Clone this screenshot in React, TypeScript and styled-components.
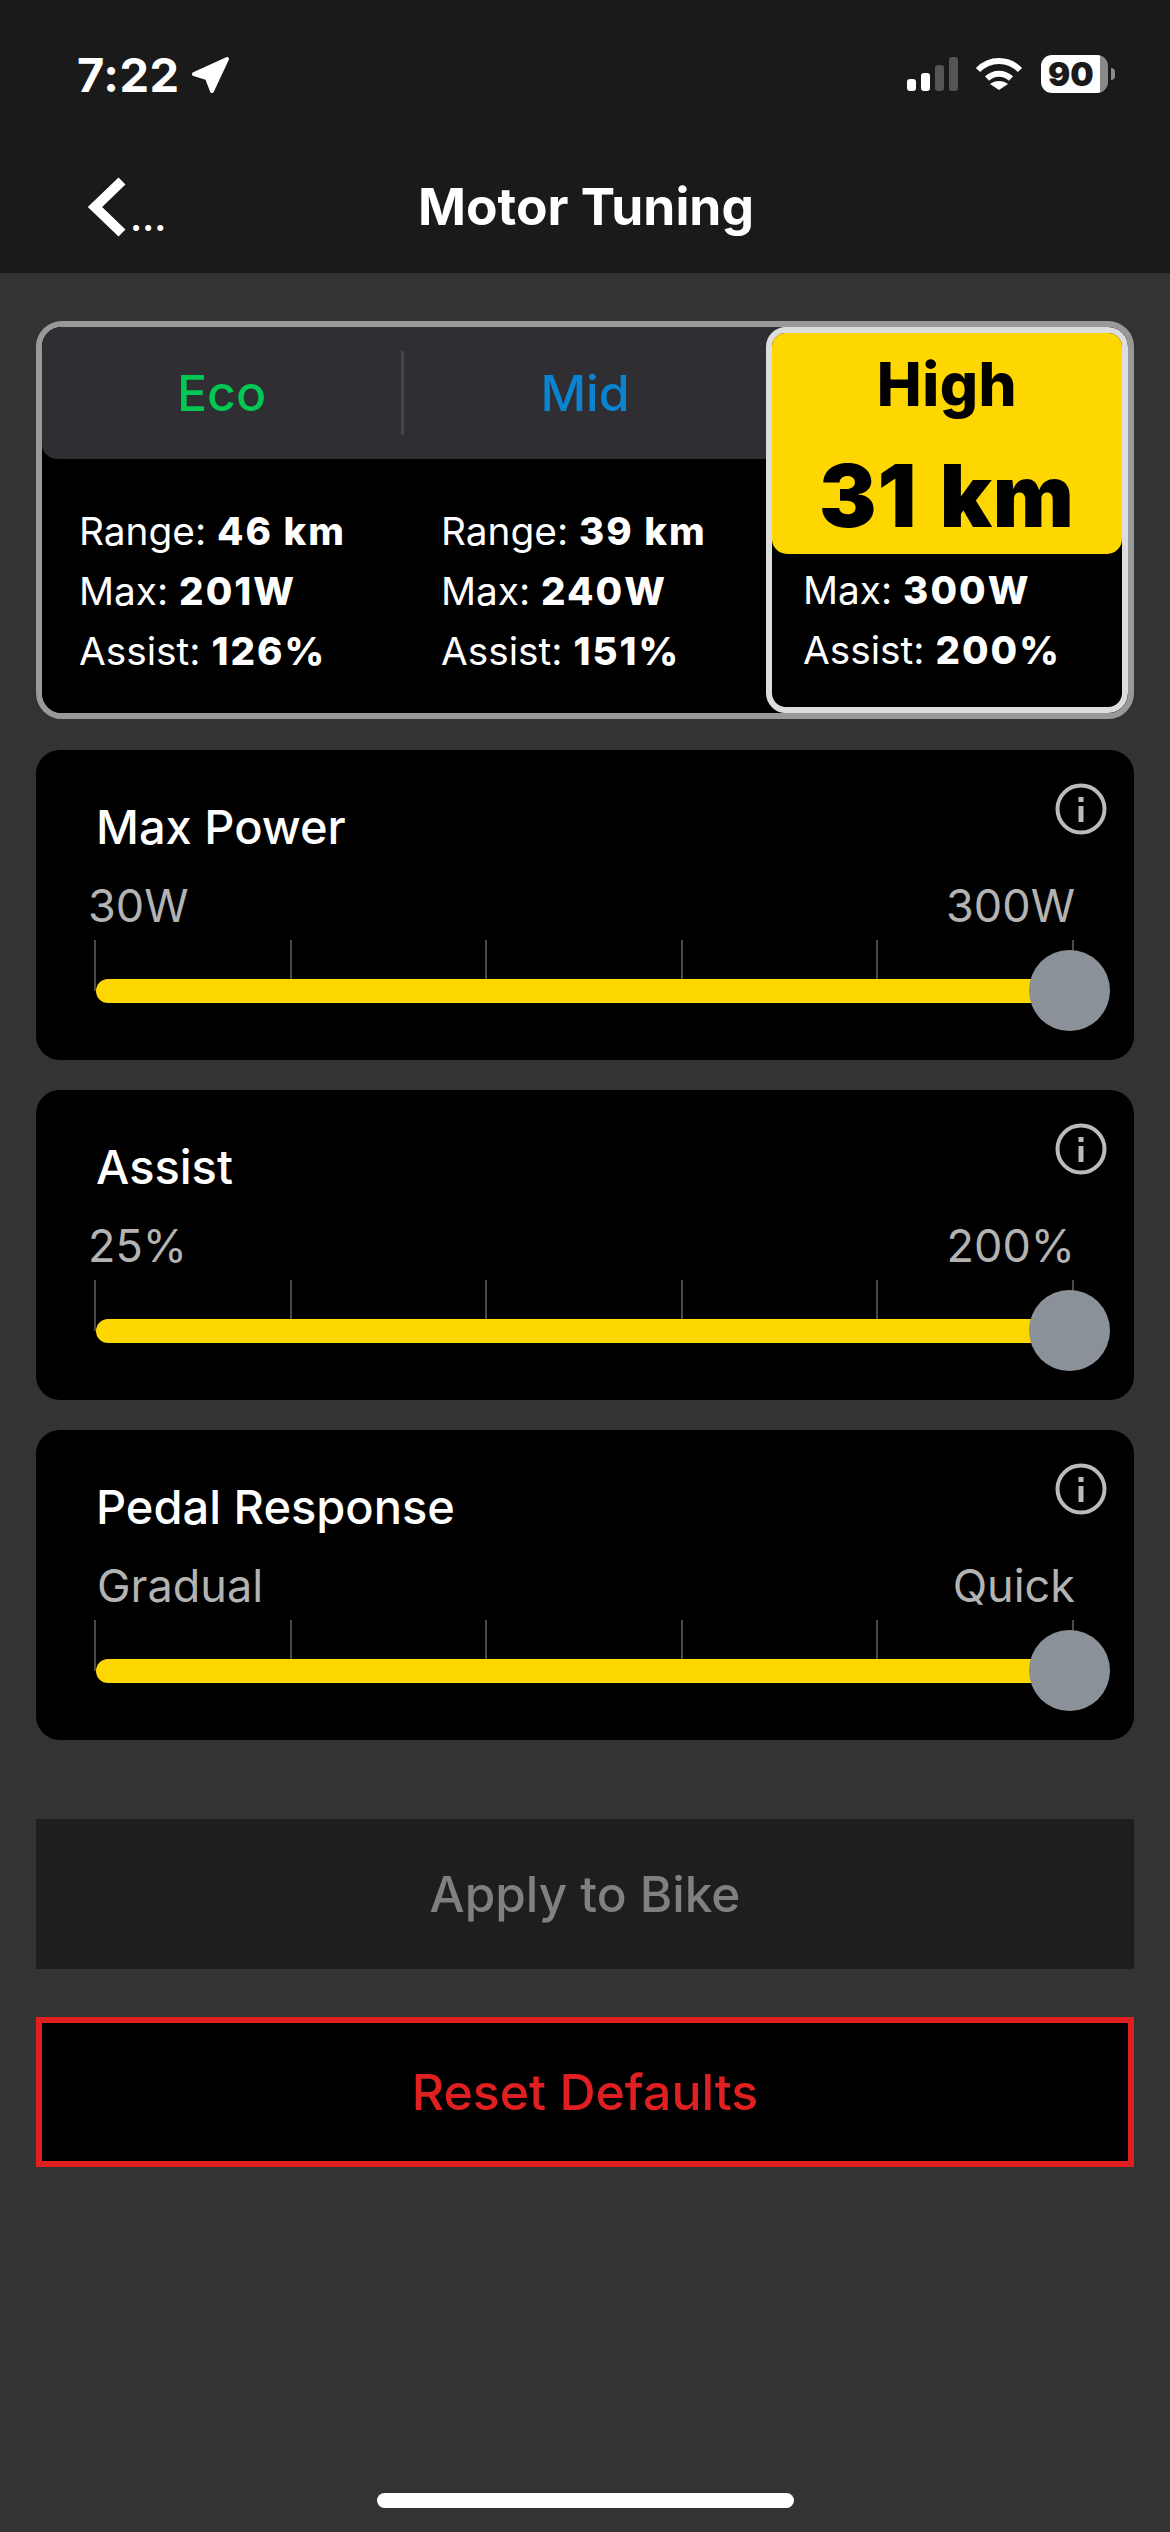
import React from "react";
import styled, { createGlobalStyle } from "styled-components";

const Global = createGlobalStyle`
  html, body { margin: 0; padding: 0; background: #333333; }
  body { font-family: Inter, "Liberation Sans", sans-serif; -webkit-font-smoothing: antialiased; font-optical-sizing: none; }
  * { box-sizing: border-box; }
`;

const Page = styled.div`
  width: 1170px;
  height: 2532px;
  background: #333333;
  display: flex;
  flex-direction: column;
  overflow: hidden;
`;
const Header = styled.header`
  background: #1a1a1a;
  height: 273px;
  flex: none;
  display: flex;
  flex-direction: column;
`;
const StatusBar = styled.div`
  height: 148px;
  padding: 0 55px 0 77px;
  display: flex;
  align-items: center;
  justify-content: space-between;
`;
const StatusLeft = styled.div`
  display: flex;
  align-items: center;
  gap: 12px;
`;
const Clock = styled.span`
  color: #fff;
  font-size: 47px;
  font-weight: 700;
  line-height: 1;
  letter-spacing: 0.5px;
`;
const StatusRight = styled.div`
  display: flex;
  align-items: center;
`;
const Wifi = styled.svg`
  margin: 0 18px 0 17px;
`;
const Battery = styled.div`
  width: 67px;
  height: 38px;
  border-radius: 11px;
  background: linear-gradient(90deg, #fff 88%, #8a8a8a 88%);
  color: #1a1a1a;
  font-size: 33px;
  font-weight: 900;
  display: flex;
  align-items: center;
  padding-left: 7px;
  line-height: 1;
`;
const BatteryCap = styled.div`
  width: 4px;
  height: 12px;
  margin-left: 3px;
  background: #8a8a8a;
  border-radius: 0 6px 6px 0;
`;
const Nav = styled.nav`
  height: 125px;
  display: flex;
  align-items: center;
  padding: 0 48px 8px 82px;
`;
const Back = styled.div`
  width: 100px;
  display: flex;
  align-items: flex-end;
`;
const BackDots = styled.span`
  color: #fff;
  font-size: 38px;
  font-weight: 600;
  line-height: 1;
  margin-left: 3px;
  margin-bottom: 5px;
`;
const NavTitle = styled.h1`
  flex: 1;
  margin: 0 132px 0 0;
  text-align: center;
  color: #fff;
  font-size: 51.5px;
  font-weight: 700;
  line-height: 1;
`;
const Content = styled.main`
  flex: 1;
  padding: 48px 36px 0;
  display: flex;
  flex-direction: column;
  position: relative;
`;
const TierCard = styled.section`
  height: 398px;
  border: 6px solid #999999;
  border-radius: 26px;
  background: linear-gradient(#2f2f33 132px, #000 132px);
  overflow: hidden;
  display: grid;
  grid-template-columns: repeat(3, 362px);
  margin-bottom: 31px;
`;
const Tier = styled.div<{ $selected?: boolean }>`
  display: flex;
  flex-direction: column;
  background: #000;
  ${(p) => p.$selected && `
    border: 6px solid #dddddd;
    border-radius: 20px;
  `}
`;
const TierHead = styled.div<{ $rounded?: boolean }>`
  height: 132px;
  padding: 24px 0;
  background: #2f2f33;
  border-bottom-left-radius: ${(p) => (p.$rounded ? "15px" : "0")};
`;
const TierName = styled.div<{ $color: string; $divider?: boolean }>`
  height: 84px;
  display: flex;
  align-items: center;
  justify-content: center;
  color: ${(p) => p.$color};
  font-size: 50px;
  font-weight: 500;
  border-right: ${(p) => (p.$divider ? "3px solid #47474b" : "0")};
`;
const ActiveHead = styled.div`
  height: 221px;
  background: #ffd700;
  border-radius: 14px 14px 15px 15px;
  color: #000;
  display: flex;
  flex-direction: column;
  align-items: center;
`;
const ActiveName = styled.div`
  font-size: 60px;
  font-weight: 800;
  letter-spacing: 0.5px;
  line-height: 70px;
  margin-top: 16px;
`;
const ActiveRange = styled.div`
  font-size: 86px;
  font-weight: 900;
  letter-spacing: 1px;
  word-spacing: 4px;
  line-height: 100px;
  margin-top: 27px;
`;
const Stats = styled.div<{ $selected?: boolean }>`
  padding: ${(p) => (p.$selected ? "6px 0 0 31px" : "42px 0 0 37px")};
  color: #fff;
  font-size: 38.8px;
  line-height: 59px;
  font-weight: 400;
  white-space: nowrap;
  b { font-weight: 800; font-size: 38.5px; letter-spacing: 2px; }
`;
const SliderCard = styled.section`
  height: 310px;
  border-radius: 24px;
  background: #000;
  padding-top: 33px;
  margin-bottom: 30px;
  display: flex;
  flex-direction: column;
`;
const SliderHead = styled.div`
  height: 52px;
  padding: 0 27px 0 60px;
  display: flex;
  justify-content: space-between;
  align-items: flex-start;
`;
const SliderTitle = styled.h2`
  margin: 0;
  color: #fff;
  font-size: 47px;
  font-weight: 500;
  line-height: 56px;
  margin-top: 16px;
`;
const Limits = styled.div`
  margin-top: 43px;
  margin-bottom: -17px;
  height: 56px;
  padding: 0 59px 0 52px;
  display: flex;
  justify-content: space-between;
  align-items: center;
  color: #b3b3b3;
  font-size: 45px;
  line-height: 56px;
`;
const LimitLabel = styled.span<{ $inset?: number }>`
  margin-left: ${(p) => p.$inset || 0}px;
`;
const Track = styled.div`
  position: relative;
  margin: 23px 0 0 58px;
  width: 1016px;
  height: 91px;
`;
const Ticks = styled.div`
  width: 980px;
  display: flex;
  justify-content: space-between;
`;
const Tick = styled.i`
  display: block;
  width: 2px;
  height: 51px;
  background: #4a4a4a;
`;
const Bar = styled.div`
  position: absolute;
  left: 2px;
  top: 39px;
  width: 970px;
  height: 24px;
  border-radius: 12px;
  background: #ffd700;
`;
const Thumb = styled.div`
  position: absolute;
  left: 935px;
  top: 10px;
  width: 81px;
  height: 81px;
  border-radius: 50%;
  background: #8a9199;
`;
const ActionButton = styled.button<{ $danger?: boolean }>`
  display: block;
  width: 1098px;
  height: 150px;
  padding: 0;
  border-radius: 0;
  font-family: inherit;
  font-size: ${(p) => (p.$danger ? "50px" : "49.5px")};
  font-weight: 500;
  text-align: center;
  border: ${(p) => (p.$danger ? "6px solid #e02020" : "0")};
  background: ${(p) => (p.$danger ? "#000" : "#1e1e1e")};
  color: ${(p) => (p.$danger ? "#e02020" : "#808080")};
`;
const ApplyButton = styled(ActionButton)`
  margin-top: 49px;
  margin-bottom: 48px;
`;
const HomeIndicator = styled.div`
  position: absolute;
  left: 377px;
  bottom: 24px;
  width: 417px;
  height: 15px;
  border-radius: 8px;
  background: #fff;
`;

const InfoIcon = () => (
  <svg width="52" height="52" viewBox="0 0 52 52" fill="none">
    <circle cx="26" cy="26" r="23.5" stroke="#bbbbbb" strokeWidth="4" />
    <rect x="23.5" y="14" width="5" height="5" fill="#bbbbbb" />
    <rect x="23.5" y="23" width="5" height="16" fill="#bbbbbb" />
  </svg>
);

const sliders = [
  { title: "Max Power", min: "30W", max: "300W", inset: 0 },
  { title: "Assist", min: "25%", max: "200%", inset: 0 },
  { title: "Pedal Response", min: "Gradual", max: "Quick", inset: 9 },
];

export default function App() {
  return (
    <Page>
      <Global />
      <Header>
        <StatusBar>
          <StatusLeft>
            <Clock>7:22</Clock>
            <svg width="37" height="37" viewBox="0 0 37 37">
              <path d="M2 18 L35 3 L20 35 L15 22 Z" fill="#fff" stroke="#fff" strokeWidth="4" strokeLinejoin="round" />
            </svg>
          </StatusLeft>
          <StatusRight>
            <svg width="51" height="34" viewBox="0 0 51 34">
              <rect x="0" y="22" width="9" height="12" rx="3" fill="#fff" />
              <rect x="14" y="16" width="9" height="18" rx="3" fill="#fff" />
              <rect x="28" y="8" width="9" height="26" rx="3" fill="#555" />
              <rect x="42" y="0" width="9" height="34" rx="3" fill="#555" />
            </svg>
            <Wifi width="48" height="34" viewBox="0 0 48 34" fill="none">
              <path d="M3 13 C15 1 33 1 45 13" stroke="#fff" strokeWidth="6" />
              <path d="M12 21.5 C19 15 29 15 36 21.5" stroke="#fff" strokeWidth="6" />
              <path d="M24 33 L15 27 C20 23 28 23 33 27 Z" fill="#fff" />
            </Wifi>
            <Battery>90</Battery>
            <BatteryCap />
          </StatusRight>
        </StatusBar>
        <Nav>
          <Back>
            <svg width="45" height="68" viewBox="0 0 45 68" fill="none">
              <path d="M40 8 L13 34 L40 60" stroke="#fff" strokeWidth="10" />
            </svg>
            <BackDots>…</BackDots>
          </Back>
          <NavTitle>Motor Tuning</NavTitle>
        </Nav>
      </Header>
      <Content>
        <TierCard>
          <Tier>
            <TierHead $rounded>
              <TierName $color="#00c853" $divider>Eco</TierName>
            </TierHead>
            <Stats>
              <div>Range: <b>46 km</b></div>
              <div>Max: <b>201W</b></div>
              <div>Assist: <b>126%</b></div>
            </Stats>
          </Tier>
          <Tier>
            <TierHead>
              <TierName $color="#0a84d0">Mid</TierName>
            </TierHead>
            <Stats>
              <div>Range: <b>39 km</b></div>
              <div>Max: <b>240W</b></div>
              <div>Assist: <b>151%</b></div>
            </Stats>
          </Tier>
          <Tier $selected>
            <ActiveHead>
              <ActiveName>High</ActiveName>
              <ActiveRange>31 km</ActiveRange>
            </ActiveHead>
            <Stats $selected>
              <div>Max: <b>300W</b></div>
              <div>Assist: <b>200%</b></div>
            </Stats>
          </Tier>
        </TierCard>
        {sliders.map((s) => (
          <SliderCard key={s.title}>
            <SliderHead>
              <SliderTitle>{s.title}</SliderTitle>
              <InfoIcon />
            </SliderHead>
            <Limits>
              <LimitLabel $inset={s.inset}>{s.min}</LimitLabel>
              <LimitLabel>{s.max}</LimitLabel>
            </Limits>
            <Track>
              <Ticks>
                {[0, 1, 2, 3, 4, 5].map((i) => (
                  <Tick key={i} />
                ))}
              </Ticks>
              <Bar />
              <Thumb />
            </Track>
          </SliderCard>
        ))}
        <ApplyButton>Apply to Bike</ApplyButton>
        <ActionButton $danger>Reset Defaults</ActionButton>
        <HomeIndicator />
      </Content>
    </Page>
  );
}
